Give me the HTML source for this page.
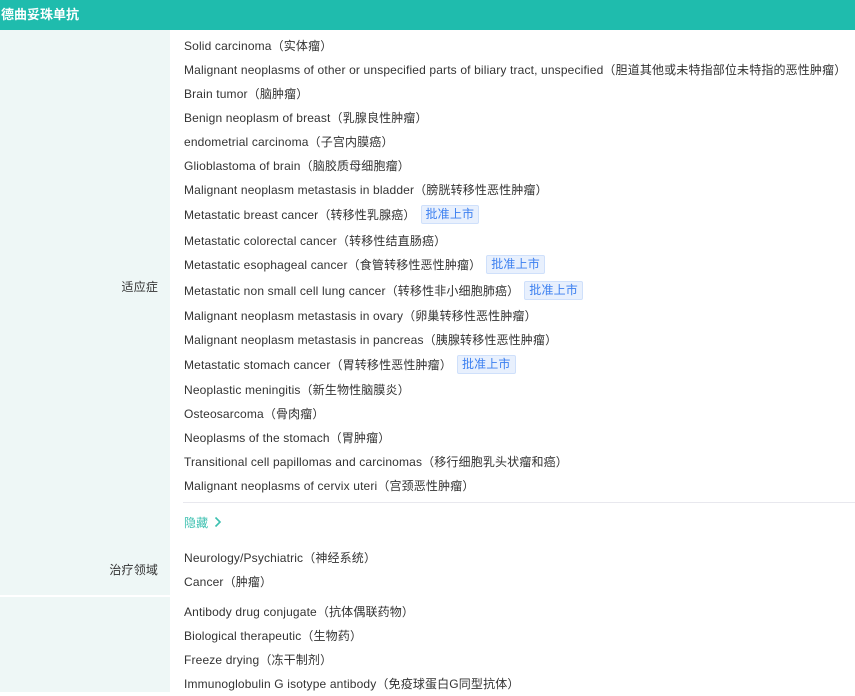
<!DOCTYPE html>
<html><head><meta charset="utf-8"><style>
body{margin:0;width:855px;height:692px;overflow:hidden;background:#fff;font-family:"Liberation Sans","Noto Sans CJK SC",sans-serif;font-size:12px;color:#333;position:relative;letter-spacing:.15px}
.hd{position:absolute;left:0;top:0;width:855px;height:30px;background:#1fbcad;color:#fff;font-weight:bold;font-size:13px;line-height:30px;padding-left:1px;letter-spacing:0}
.lc{position:absolute;left:0;width:170px;background:#eef7f6}
.r{position:absolute;left:184px;line-height:24px;white-space:nowrap;margin-top:1px}
.lb{position:absolute;right:697px;line-height:24px;margin-top:1px}
.t{display:inline-block;margin-left:5px;padding:0 4px;height:17px;line-height:17px;background:#e8f0fd;border:1px solid #cfe0fb;color:#3b7ff0;border-radius:2px;vertical-align:1px}
</style></head><body>
<div class="hd">德曲妥珠单抗</div>
<div class="lc" style="top:30px;height:565px"></div>
<div class="lc" style="top:597px;height:95px"></div>
<div class="lb" style="top:274px">适应症</div>
<div class="lb" style="top:557px">治疗领域</div>
<div class="r" style="top:33px">Solid carcinoma（实体瘤）</div>
<div class="r" style="top:57px">Malignant neoplasms of other or unspecified parts of biliary tract, unspecified（胆道其他或未特指部位未特指的恶性肿瘤）</div>
<div class="r" style="top:81px">Brain tumor（脑肿瘤）</div>
<div class="r" style="top:105px">Benign neoplasm of breast（乳腺良性肿瘤）</div>
<div class="r" style="top:129px">endometrial carcinoma（子宫内膜癌）</div>
<div class="r" style="top:153px">Glioblastoma of brain（脑胶质母细胞瘤）</div>
<div class="r" style="top:177px">Malignant neoplasm metastasis in bladder（膀胱转移性恶性肿瘤）</div>
<div class="r" style="top:202px">Metastatic breast cancer（转移性乳腺癌）<span class="t">批准上市</span></div>
<div class="r" style="top:228px">Metastatic colorectal cancer（转移性结直肠癌）</div>
<div class="r" style="top:252px">Metastatic esophageal cancer（食管转移性恶性肿瘤）<span class="t">批准上市</span></div>
<div class="r" style="top:278px">Metastatic non small cell lung cancer（转移性非小细胞肺癌）<span class="t">批准上市</span></div>
<div class="r" style="top:303px">Malignant neoplasm metastasis in ovary（卵巢转移性恶性肿瘤）</div>
<div class="r" style="top:327px">Malignant neoplasm metastasis in pancreas（胰腺转移性恶性肿瘤）</div>
<div class="r" style="top:352px">Metastatic stomach cancer（胃转移性恶性肿瘤）<span class="t">批准上市</span></div>
<div class="r" style="top:377px">Neoplastic meningitis（新生物性脑膜炎）</div>
<div class="r" style="top:401px">Osteosarcoma（骨肉瘤）</div>
<div class="r" style="top:425px">Neoplasms of the stomach（胃肿瘤）</div>
<div class="r" style="top:449px">Transitional cell papillomas and carcinomas（移行细胞乳头状瘤和癌）</div>
<div class="r" style="top:473px">Malignant neoplasms of cervix uteri（宫颈恶性肿瘤）</div>
<div style="position:absolute;left:183px;top:502px;width:672px;height:1px;background:#e8e8ee"></div>
<div class="r" style="top:510px;color:#3cc0b0">隐藏 <svg width="8" height="12" viewBox="0 0 8 12" style="vertical-align:-1px;margin-left:2px"><path d="M1.5 1.5L6 6L1.5 10.5" fill="none" stroke="#3cc0b0" stroke-width="1.6"/></svg></div>
<div class="r" style="top:545px">Neurology/Psychiatric（神经系统）</div>
<div class="r" style="top:569px">Cancer（肿瘤）</div>
<div class="r" style="top:599px">Antibody drug conjugate（抗体偶联药物）</div>
<div class="r" style="top:623px">Biological therapeutic（生物药）</div>
<div class="r" style="top:647px">Freeze drying（冻干制剂）</div>
<div class="r" style="top:671px">Immunoglobulin G isotype antibody（免疫球蛋白G同型抗体）</div>
</body></html>
